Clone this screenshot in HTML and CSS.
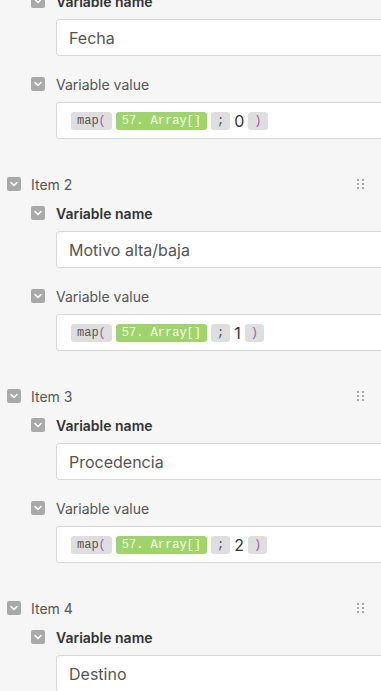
FILE: index.html
```html
<!DOCTYPE html>
<html lang="en">
<head>
    <meta charset="UTF-8">
    <meta name="viewport" content="width=device-width, initial-scale=1.0">
    <title>Set variables</title>
    <link rel="stylesheet" href="styles.css">
</head>
<body>
    <main class="list">
        <!-- Item 1 -->
        <section class="item">
            <div class="item-head">
                <span class="toggle"><svg viewBox="0 0 14 14"><polyline points="4,5.5 7,8.5 10,5.5"/></svg></span>
                <span class="item-title">Item 1</span>
                <span class="handle"><i></i><i></i><i></i><i></i><i></i><i></i></span>
            </div>
            <div class="field">
                <div class="field-head">
                    <span class="toggle"><svg viewBox="0 0 14 14"><polyline points="4,5.5 7,8.5 10,5.5"/></svg></span>
                    <span class="label-bold">Variable name</span>
                </div>
                <div class="input">Fecha</div>
            </div>
            <div class="field">
                <div class="field-head">
                    <span class="toggle"><svg viewBox="0 0 14 14"><polyline points="4,5.5 7,8.5 10,5.5"/></svg></span>
                    <span class="label">Variable value</span>
                </div>
                <div class="input code">
                    <span class="tag">map<b class="paren">(</b></span>
                    <span class="tag green">57. Array[]</span>
                    <span class="tag"><b class="semi">;</b></span>
                    <span class="num">0</span>
                    <span class="tag"><b class="paren">)</b></span>
                </div>
            </div>
        </section>

        <!-- Item 2 -->
        <section class="item">
            <div class="item-head">
                <span class="toggle"><svg viewBox="0 0 14 14"><polyline points="4,5.5 7,8.5 10,5.5"/></svg></span>
                <span class="item-title">Item 2</span>
                <span class="handle"><i></i><i></i><i></i><i></i><i></i><i></i></span>
            </div>
            <div class="field">
                <div class="field-head">
                    <span class="toggle"><svg viewBox="0 0 14 14"><polyline points="4,5.5 7,8.5 10,5.5"/></svg></span>
                    <span class="label-bold">Variable name</span>
                </div>
                <div class="input">Motivo alta/baja</div>
            </div>
            <div class="field">
                <div class="field-head">
                    <span class="toggle"><svg viewBox="0 0 14 14"><polyline points="4,5.5 7,8.5 10,5.5"/></svg></span>
                    <span class="label">Variable value</span>
                </div>
                <div class="input code">
                    <span class="tag">map<b class="paren">(</b></span>
                    <span class="tag green">57. Array[]</span>
                    <span class="tag"><b class="semi">;</b></span>
                    <span class="num">1</span>
                    <span class="tag"><b class="paren">)</b></span>
                </div>
            </div>
        </section>

        <!-- Item 3 -->
        <section class="item">
            <div class="item-head">
                <span class="toggle"><svg viewBox="0 0 14 14"><polyline points="4,5.5 7,8.5 10,5.5"/></svg></span>
                <span class="item-title">Item 3</span>
                <span class="handle"><i></i><i></i><i></i><i></i><i></i><i></i></span>
            </div>
            <div class="field">
                <div class="field-head">
                    <span class="toggle"><svg viewBox="0 0 14 14"><polyline points="4,5.5 7,8.5 10,5.5"/></svg></span>
                    <span class="label-bold">Variable name</span>
                </div>
                <div class="input">Procedencia</div>
            </div>
            <div class="field">
                <div class="field-head">
                    <span class="toggle"><svg viewBox="0 0 14 14"><polyline points="4,5.5 7,8.5 10,5.5"/></svg></span>
                    <span class="label">Variable value</span>
                </div>
                <div class="input code">
                    <span class="tag">map<b class="paren">(</b></span>
                    <span class="tag green">57. Array[]</span>
                    <span class="tag"><b class="semi">;</b></span>
                    <span class="num">2</span>
                    <span class="tag"><b class="paren">)</b></span>
                </div>
            </div>
        </section>

        <!-- Item 4 -->
        <section class="item">
            <div class="item-head">
                <span class="toggle"><svg viewBox="0 0 14 14"><polyline points="4,5.5 7,8.5 10,5.5"/></svg></span>
                <span class="item-title">Item 4</span>
                <span class="handle"><i></i><i></i><i></i><i></i><i></i><i></i></span>
            </div>
            <div class="field">
                <div class="field-head">
                    <span class="toggle"><svg viewBox="0 0 14 14"><polyline points="4,5.5 7,8.5 10,5.5"/></svg></span>
                    <span class="label-bold">Variable name</span>
                </div>
                <div class="input">Destino</div>
            </div>
        </section>
    </main>
</body>
</html>
```

FILE: styles.css
```css
body {
    margin: 0;
    padding: 0;
    background-color: #f6f6f6;
    font-family: Inter, "Noto Sans", sans-serif;
    color: #333;
    overflow: hidden;
}
.list {
    margin-top: -38px;
    padding-left: 7px;
}
.item {
    display: flex;
    flex-direction: column;
    padding-bottom: 35px;
}
.item-head, .field-head {
    display: flex;
    align-items: center;
    height: 20px;
}
.item-head {
    margin-right: 17px;
}
.field {
    margin-left: 24px;
    margin-top: 9px;
}
.field + .field {
    margin-top: 18px;
}
.toggle {
    width: 14px;
    height: 14px;
    border-radius: 2px;
    background-color: #a9a9a9;
    display: inline-flex;
    flex: none;
}
.toggle svg {
    width: 14px;
    height: 14px;
    fill: none;
    stroke: #fff;
    stroke-width: 1.6;
    stroke-linecap: round;
    stroke-linejoin: round;
}
.item-title {
    margin-left: 10px;
    font-size: 14px;
    color: #555;
    flex: 1;
}
.label, .label-bold {
    margin-left: 11px;
    font-size: 14px;
}
.label {
    color: #555;
}
.label-bold {
    font-weight: 600;
    color: #333;
}
.handle {
    display: grid;
    grid-template-columns: 2px 2px;
    grid-auto-rows: 2px;
    column-gap: 3px;
    row-gap: 2px;
}
.handle i {
    background-color: #8e8e8e;
    border-radius: 1px;
}
.input {
    margin-top: 8px;
    margin-left: 25px;
    margin-right: -40px;
    height: 37px;
    box-sizing: border-box;
    border: 1px solid #d8d8d8;
    border-radius: 3px;
    background: #fff;
    padding: 0 12px;
    display: flex;
    align-items: center;
    font-size: 16px;
    color: #555;
}
.code {
    padding: 0 14px;
    gap: 4px;
}
.tag {
    display: inline-flex;
    align-items: center;
    height: 18px;
    padding: 0 6px;
    border-radius: 3px;
    background-color: #dedede;
    font-family: "Liberation Mono", monospace;
    font-size: 12px;
    color: #555;
}
.tag b {
    font-weight: normal;
}
.tag .paren {
    color: #9a5aa8;
}
.tag .semi {
    color: #44506a;
}
.tag.green {
    background-color: #9fd36c;
    color: #f6ffe8;
}
.num {
    font-size: 16px;
    color: #333;
}
```
